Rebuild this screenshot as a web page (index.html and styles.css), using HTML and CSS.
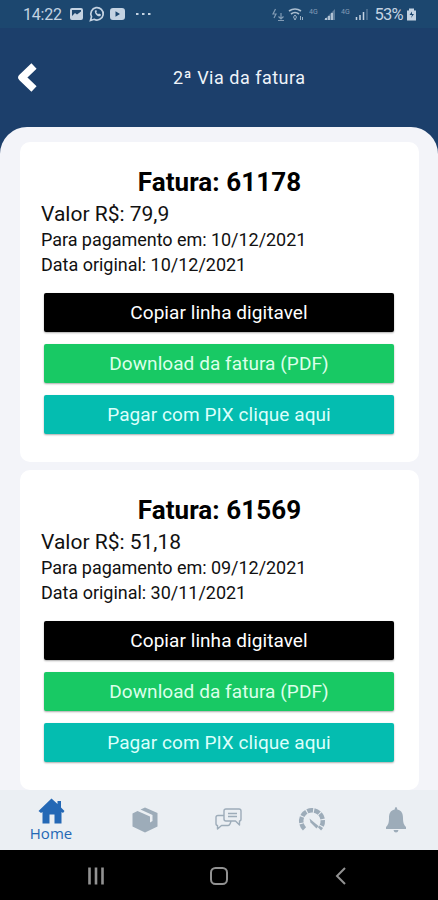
FILE: index.html
```html
<!DOCTYPE html>
<html lang="pt-BR">
<head>
<meta charset="utf-8">
<meta name="viewport" content="width=device-width, initial-scale=1">
<title>2ª Via da fatura</title>
<link rel="stylesheet" href="styles.css">
</head>
<body>
<div class="phone">
  <div class="status">
    <span class="clock">14:22</span>
    <svg class="status-left" width="84" height="18" viewBox="0 0 84 18" fill="none" stroke="currentColor">
      <rect x="1" y="4" width="11" height="10" rx="1" stroke-width="2"/>
      <path d="M2 11l3-3 2 1.500 4-3V14H2z" fill="currentColor" stroke="none"/>
      <path d="M20.500 15.500l1-3.800a6.200 6.200 0 1 1 2.600 2.600z" stroke-width="1.700"/>
      <path d="M25 5.500c-1 2.500 2.500 7 5.500 5.500l.5-1.500-2-1-1 .8-1.800-2 .7-.8-.6-1.500z" fill="currentColor" stroke="none"/>
      <path fill-rule="evenodd" d="M43 3h9q3 0 3 3v6q0 3-3 3h-9q-3 0-3-3V6q0-3 3-3zM45.500 6.300v5.400L50 9z" fill="currentColor" stroke="none"/>
      <path d="M66 9h2.500M72 9h2.500M78 9h2.500" stroke-width="2"/>
    </svg>
    <svg class="status-right" width="98" height="18" viewBox="0 0 98 18" fill="none" stroke="currentColor">
      <path d="M4.500 4L2 9h3l-2 4M10 8v6M7.500 11.500l2.500 2.500 2.500-2.500M7 15.500h6" stroke-width="1.200" opacity=".6"/>
      <path d="M18 6q6-4 12 0M20 9q4-3 8 0" stroke-width="1.700" opacity=".85"/>
      <path d="M24 10l-1.500 2 1.500 3 1.500-3zM29.500 11v4m2 0v-3" stroke-width="1" opacity=".75"/>
      <text x="38" y="9" class="net">4G</text>
      <path d="M53 15l11-11v11z" fill="currentColor" stroke="none" opacity=".4"/>
      <path d="M55 15v-2M58 15v-4M61 15V8" stroke-width="2" opacity=".8"/>
      <text x="70" y="9" class="net">4G</text>
      <path d="M85.500 15v-3M89 15V10M92.500 15V7" stroke-width="1.500"/>
      <path d="M96 15V4" stroke-width="1.500" opacity=".35"/>
    </svg>
    <span class="battery">53%</span>
    <svg width="11" height="14" viewBox="0 0 11 14"><path fill="currentColor" fill-rule="evenodd" d="M1 3.500h2V1.500h5v2h2v10H1zM6 4.500L3.500 8H6l-1 3 3-4H6z"/></svg>
  </div>
  <header class="header">
    <svg class="back" width="24" height="34" viewBox="0 0 24 34"><path d="M18 5L6 16.500 18 28" fill="none" stroke="#fff" stroke-width="7.500" stroke-linejoin="round"/></svg>
    <h1>2ª Via da fatura</h1>
  </header>
  <main class="sheet">
    <section class="card">
      <h2>Fatura: 61178</h2>
      <p class="value">Valor R$: 79,9</p>
      <p class="due">Para pagamento em: 10/12/2021</p>
      <p class="original">Data original: 10/12/2021</p>
      <div class="actions">
        <button class="copy">Copiar linha digitavel</button>
        <button class="download">Download da fatura (PDF)</button>
        <button class="pix">Pagar com PIX clique aqui</button>
      </div>
    </section>
    <section class="card">
      <h2>Fatura: 61569</h2>
      <p class="value">Valor R$: 51,18</p>
      <p class="due">Para pagamento em: 09/12/2021</p>
      <p class="original">Data original: 30/11/2021</p>
      <div class="actions">
        <button class="copy">Copiar linha digitavel</button>
        <button class="download">Download da fatura (PDF)</button>
        <button class="pix">Pagar com PIX clique aqui</button>
      </div>
    </section>
  </main>
  <nav class="tabs">
    <a class="tab active">
      <svg width="28" height="26" viewBox="0 0 28 26"><path fill="currentColor" d="M14.500 .5L20.500 6V3h3.500v6.500l3.500 3.500-1.500 2-1.500-1v11.500h-7v-9h-5v9h-7V14L4 15l-2.500-2z"/></svg>
      <span>Home</span>
    </a>
    <a class="tab"><svg width="28" height="28" viewBox="0 0 28 28"><path fill="currentColor" d="M14 1.500l12.500 5.500v13.500L14 26.500 1.500 20.500V7.500l5-2.500L19 10.500v6l2.500-1.500V9L9.500 3.500z"/></svg></a>
    <a class="tab"><svg width="28" height="28" viewBox="0 0 28 28" fill="none" stroke="currentColor" stroke-width="1.400" stroke-linejoin="round"><path d="M12 3h13q2 0 2 2v8q0 2-1.500 2v4l-4-4H12q-2 0-2-2V5q0-2 2-2zM14 7.500h9M14 10.500h9M10 9.500H4q-2 0-2 2v6q0 2 1.500 2V23l4-3.500H14q2 0 3-4.500"/></svg></a>
    <a class="tab"><svg width="28" height="28" viewBox="0 0 28 28"><path fill="none" stroke="currentColor" stroke-width="4.500" stroke-dasharray="5.800 1.100" d="M6.500 22.800A10.800 10.800 0 1 1 21.500 22.800"/><path fill="currentColor" d="M11.500 12.500l9 7.500-2 2.500-6-6z"/></svg></a>
    <a class="tab"><svg width="24" height="28" viewBox="0 0 24 28"><path fill="currentColor" d="M12 1q1.300 0 1.300 2.500C18 4.500 19 8 19 12c0 5 1 7 3 9v2H2v-2c2-2 3-4 3-9 0-4 1-7.500 5.700-8.500Q10.700 1 12 1zM9.500 24h5q-.5 2.500-2.500 2.500T9.500 24z"/></svg></a>
  </nav>
  <div class="system">
    <svg width="18" height="20" viewBox="0 0 18 20"><path d="M2.500 1.500v17M9 1.500v17M15.500 1.500v17" stroke="currentColor" stroke-width="2.600"/></svg>
    <svg width="20" height="20" viewBox="0 0 20 20"><rect x="2" y="2" width="16" height="16" rx="4.500" fill="none" stroke="currentColor" stroke-width="2"/></svg>
    <svg width="12" height="20" viewBox="0 0 12 20"><path d="M10 2L2 10l8 8" fill="none" stroke="currentColor" stroke-width="2"/></svg>
  </div>
</div>
</body>
</html>
```
FILE: styles.css
```css
* { box-sizing: border-box; }
body { margin: 0; font-family: Roboto, "Liberation Sans", sans-serif; }
h1, h2, p { margin: 0; }
svg { display: block; flex: none; }
.phone { width: 438px; height: 900px; display: flex; flex-direction: column; overflow: hidden; background: #1c3f6b; }
.status { flex: none; height: 28px; padding: 0 21px 0 23px; display: flex; align-items: center; background: #1c476f; color: #c4d3e2; font-size: 16px; }
.clock { width: 47px; letter-spacing: -.2px; }
.status-right { margin-left: auto; }
.battery { margin: 0 3px 0 5px; letter-spacing: -.7px; font-size: 16.500px; }
.net { font-size: 7px; fill: currentColor; stroke: none; opacity: .6; }
.header { flex: none; height: 99px; padding-left: 15px; display: flex; align-items: center; }
.back { margin-left: 1px; }
h1 { margin-left: 133px; color: #eef3f9; font-size: 18px; font-weight: 400; letter-spacing: .5px; }
.sheet { flex: 1; min-height: 0; padding: 15px 19px 0 20px; display: flex; flex-direction: column; gap: 8px; background: #f3f4f9; border-radius: 27px 27px 0 0; overflow: hidden; }
.card { flex: none; height: 320px; padding: 24px 21px 0; border-radius: 10px; background: #fff; color: #111; }
h2 { text-align: center; font-size: 26px; line-height: 32px; font-weight: 700; letter-spacing: .07px; color: #000; }
.value { font-size: 21px; line-height: 32px; }
.due, .original { font-size: 18px; line-height: 25px; }
.due { margin-top: -3px; letter-spacing: -.04px; }
.original { letter-spacing: -.02px; }
.actions { display: flex; flex-direction: column; gap: 12px; padding: 16px 4px 0 3px; }
button { height: 39px; border: 0; border-radius: 2px; padding: 0; color: #fff; font: 400 19px Roboto, sans-serif; letter-spacing: .06px; box-shadow: 0 1px 2px #0005; }
.copy { background: #000; }
.download { background: #18c964; color: #dcffea; }
.pix { background: #04bdb0; color: #dcfffb; }
.tabs { flex: none; height: 60px; padding: 0 0 0 5px; display: grid; grid-template-columns: 92px 95px 72px 96px 72px; background: #ebeff3; color: #9dacb9; }
.tab { display: flex; flex-direction: column; align-items: center; justify-content: center; }
.active { color: #2468b5; font: 15px/18px "Open Sans", sans-serif; }
.system { flex: none; height: 50px; padding: 2px 91px 0 87px; display: flex; justify-content: space-between; align-items: center; background: #000; color: #929292; }
.system svg:nth-child(2) { margin-right: 3px; }
```
